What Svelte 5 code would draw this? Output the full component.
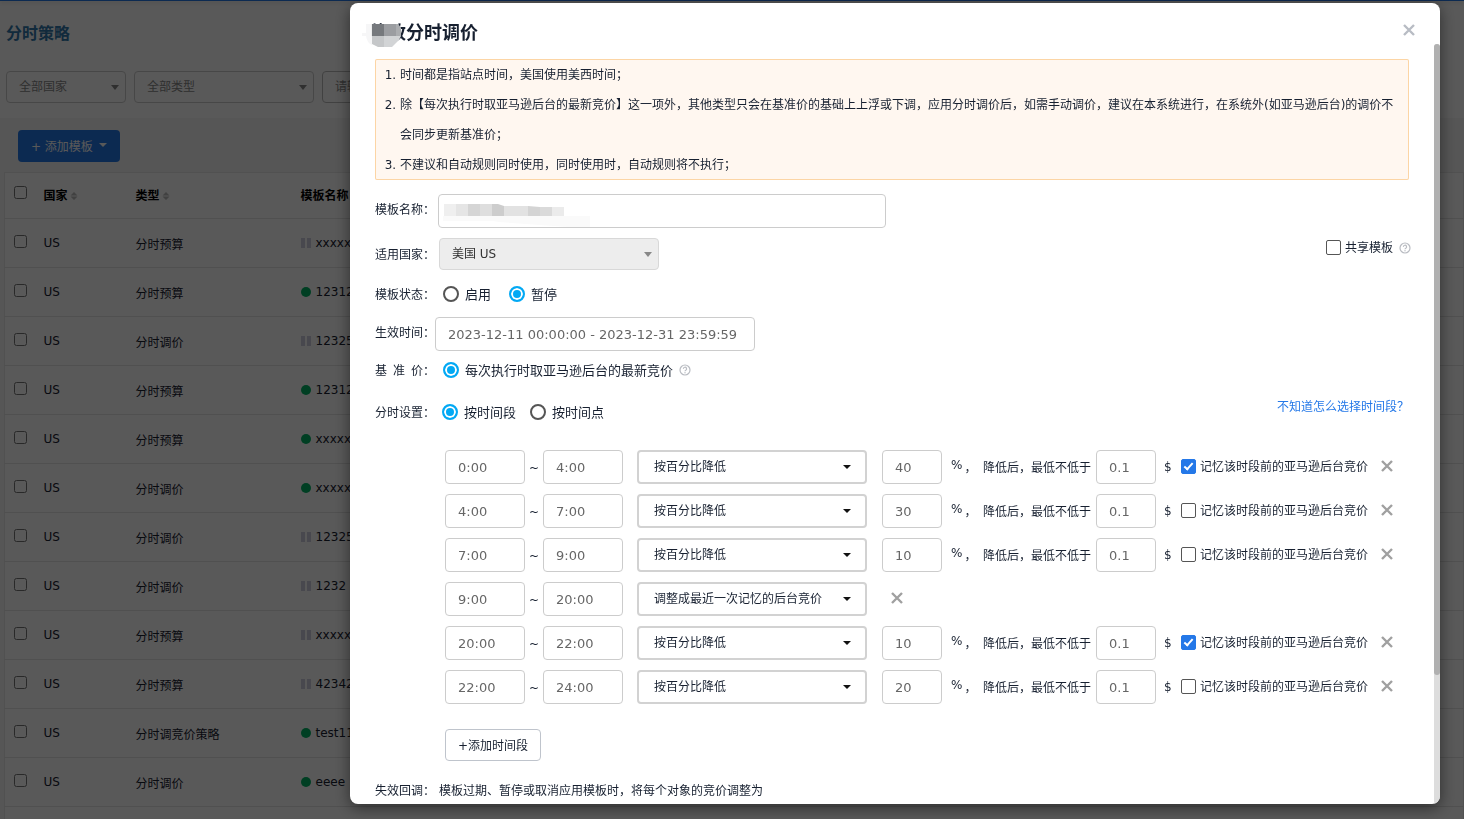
<script>
  const templates = [
    { type: '分时预算', on: false, name: 'xxxxxxx' },
    { type: '分时预算', on: true, name: '1231231' },
    { type: '分时调价', on: false, name: '1232512' },
    { type: '分时预算', on: true, name: '1231231' },
    { type: '分时预算', on: true, name: 'xxxxxxx' },
    { type: '分时调价', on: true, name: 'xxxxxxx' },
    { type: '分时调价', on: false, name: '1232512' },
    { type: '分时调价', on: false, name: '1232' },
    { type: '分时预算', on: false, name: 'xxxxxxx' },
    { type: '分时预算', on: false, name: '4234234' },
    { type: '分时调竞价策略', on: true, name: 'test1111' },
    { type: '分时调价', on: true, name: 'eeee' }
  ];

  const LOWER = '按百分比降低';
  const RESTORE = '调整成最近一次记忆的后台竞价';

  let slots = $state([
    { from: '0:00', to: '4:00', mode: LOWER, pct: '40', min: '0.1', keep: true },
    { from: '4:00', to: '7:00', mode: LOWER, pct: '30', min: '0.1', keep: false },
    { from: '7:00', to: '9:00', mode: LOWER, pct: '10', min: '0.1', keep: false },
    { from: '9:00', to: '20:00', mode: RESTORE, pct: '', min: '', keep: false },
    { from: '20:00', to: '22:00', mode: LOWER, pct: '10', min: '0.1', keep: true },
    { from: '22:00', to: '24:00', mode: LOWER, pct: '20', min: '0.1', keep: false }
  ]);

  let status = $state('pause');
  let split = $state('range');
  let period = $state('2023-12-11 00:00:00 - 2023-12-31 23:59:59');

  function removeSlot(i) {
    slots.splice(i, 1);
  }
  function addSlot() {
    slots.push({ from: '', to: '', mode: LOWER, pct: '', min: '0.1', keep: false });
  }
</script>

{#snippet help()}
  <svg class="help" viewBox="0 0 12 12" aria-hidden="true">
    <circle cx="6" cy="6" r="5" fill="none" stroke="#b9bcc2" stroke-width="1.2" />
    <path d="M4.4 4.9a1.6 1.6 0 1 1 2.4 1.3c-.6.3-.8.5-.8 1.1" fill="none" stroke="#b9bcc2" stroke-width="1.2" />
    <circle cx="6" cy="8.8" r=".7" fill="#b9bcc2" />
  </svg>
{/snippet}

{#snippet cross()}
  <svg class="cross" viewBox="0 0 12 12" aria-hidden="true">
    <path d="M1 1 11 11M11 1 1 11" fill="none" stroke="currentColor" stroke-width="2.4" />
  </svg>
{/snippet}

{#snippet sorter()}
  <svg class="sorter" viewBox="0 0 8 10" aria-hidden="true">
    <path d="M4 1 7.5 4.4H.5zM4 9 .5 5.6h7z" fill="#bbb" />
  </svg>
{/snippet}

<main class="page">
  <div class="topbar"></div>
  <header class="head">
    <h1>分时策略</h1>
    <div class="filters">
      <span class="pick country">
        <select aria-label="国家"><option>全部国家</option></select>
      </span>
      <span class="pick type">
        <select aria-label="类型"><option>全部类型</option></select>
      </span>
      <input class="search" placeholder="请输入模板名称" aria-label="模板名称" />
    </div>
  </header>
  <section class="listing">
    <button class="create" type="button">+ 添加模板 <i class="caret"></i></button>
    <table>
      <thead>
        <tr>
          <th class="c-check"><input type="checkbox" aria-label="全选" /></th>
          <th class="c-country">国家{@render sorter()}</th>
          <th class="c-type">类型{@render sorter()}</th>
          <th>模板名称</th>
        </tr>
      </thead>
      <tbody>
        {#each templates as t}
          <tr>
            <td><input type="checkbox" aria-label={t.name} /></td>
            <td>US</td>
            <td>{t.type}</td>
            <td><span class={t.on ? 'dot' : 'bars'}></span>{t.name}</td>
          </tr>
        {/each}
        <tr><td colspan="4"></td></tr>
      </tbody>
    </table>
  </section>
</main>

<div class="overlay">
  <div class="dialog" role="dialog" aria-modal="true" aria-labelledby="dialog-title">
    <header class="dialog-head">
      <h2 id="dialog-title">
        修改分时调价
        <svg class="mosaic" viewBox="0 0 40 24" aria-hidden="true">
          <path d="M4 0H10V12H10V21Q5 19 4 12H0V9H4z" fill="#f6f6f7" />
          <path d="M9 0H10V12H9z" fill="#eceded" />
          <path d="M10 0H22V12H10z" fill="#76797d" />
          <path d="M22 0H36L39 4V12H22z" fill="#9b9da1" />
          <path d="M34 0H36L39 4V12H34z" fill="#abadb0" />
          <path d="M10 12H22V23H16L10 20z" fill="#c5c7c9" />
          <path d="M22 12H39L37 16 30 23H22z" fill="#d2d4d6" />
        </svg>
      </h2>
      <button class="close" type="button" aria-label="关闭">{@render cross()}</button>
    </header>

    <div class="dialog-scroll">
      <form class="dialog-body">
        <ol class="note">
          <li>时间都是指站点时间，美国使用美西时间；</li>
          <li>除【每次执行时取亚马逊后台的最新竞价】这一项外，其他类型只会在基准价的基础上上浮或下调，应用分时调价后，如需手动调价，建议在本系统进行，在系统外(如亚马逊后台)的调价不会同步更新基准价；</li>
          <li>不建议和自动规则同时使用，同时使用时，自动规则将不执行；</li>
        </ol>

        <div class="row boxed first">
          <label class="name" for="f-name">模板名称：</label>
          <span class="masked">
            <input id="f-name" class="box wide" />
            <svg class="mosaic" viewBox="0 0 148 24" aria-hidden="true">
              <path d="M0 12H147V23H125L56 18 50 17H0z" fill="#fafafa" />
              <path d="M1 0H13V12H1z" fill="#efefef" />
              <path d="M13 0H25V12H13z" fill="#e5e5e5" />
              <path d="M25 0H37V12H25z" fill="#d5d5d5" />
              <path d="M37 0H49V12H37z" fill="#dedede" />
              <path d="M49 0H55L61 2V12H49z" fill="#cdcdcd" />
              <path d="M61 2H85V12H61z" fill="#e2e2e2" />
              <path d="M85 2 97 3V12H85z" fill="#d4d4d4" />
              <path d="M97 3H109V12H97z" fill="#dadada" />
              <path d="M109 3H121V12H109z" fill="#ebebeb" />
            </svg>
          </span>
        </div>

        <div class="row boxed second">
          <label class="name" for="f-country">适用国家：</label>
          <span class="pick nation">
            <select id="f-country" disabled><option>美国 US</option></select>
          </span>
          <span class="share">
            <label class="tick"><input type="checkbox" /><span>共享模板</span></label>
            {@render help()}
          </span>
        </div>

        <div class="row third" role="radiogroup" aria-labelledby="l-status">
          <span class="name" id="l-status">模板状态：</span>
          <label class="choice"><input type="radio" name="status" value="on" bind:group={status} /><span>启用</span></label>
          <label class="choice"><input type="radio" name="status" value="pause" bind:group={status} /><span>暂停</span></label>
        </div>

        <div class="row boxed period">
          <label class="name" for="f-period">生效时间：</label>
          <input id="f-period" class="box date" bind:value={period} />
        </div>

        <div class="row base" role="radiogroup" aria-label="基准价">
          <span class="name spread"><span>基</span><span>准</span><span>价：</span></span>
          <label class="choice"><input type="radio" name="base" checked /><span>每次执行时取亚马逊后台的最新竞价</span></label>
          {@render help()}
        </div>

        <div class="row split" role="radiogroup" aria-labelledby="l-split">
          <span class="name" id="l-split">分时设置：</span>
          <label class="choice"><input type="radio" name="split" value="range" bind:group={split} /><span>按时间段</span></label>
          <label class="choice"><input type="radio" name="split" value="point" bind:group={split} /><span>按时间点</span></label>
          <a class="guide" href="#guide">不知道怎么选择时间段？</a>
        </div>

        <div class="slots">
          {#each slots as s, i}
            <div class="slot">
              <input class="box time" aria-label="开始时间" bind:value={s.from} />
              <span class="tilde">~</span>
              <input class="box time" aria-label="结束时间" bind:value={s.to} />
              <span class="pick mode">
                <select aria-label="调价方式" bind:value={s.mode}>
                  <option>{LOWER}</option>
                  <option>{RESTORE}</option>
                </select>
              </span>
              {#if s.mode === LOWER}
                <input class="box num" aria-label="百分比" bind:value={s.pct} />
                <span class="pct"><span>%</span><span>，</span></span>
                <span class="floor">降低后，最低不低于</span>
                <input class="box num" aria-label="最低竞价" bind:value={s.min} />
                <span class="dollar">$</span>
                <label class="tick"><input type="checkbox" bind:checked={s.keep} /><span>记忆该时段前的亚马逊后台竞价</span></label>
              {/if}
              <button class="remove" class:alone={s.mode !== LOWER} type="button" aria-label="删除" onclick={() => removeSlot(i)}>
                {@render cross()}
              </button>
            </div>
          {/each}
          <button class="add" type="button" onclick={addSlot}>+添加时间段</button>
        </div>

        <div class="row last">
          <span class="name">失效回调：</span>
          <span>模板过期、暂停或取消应用模板时，将每个对象的竞价调整为</span>
        </div>
      </form>
      <div class="track"><div class="thumb"></div></div>
    </div>
  </div>
</div>

<style>
  :global(body) {
    margin: 0;
    overflow: hidden;
    font-family: 'DejaVu Sans', 'Noto Sans CJK SC', sans-serif;
    font-size: 12px;
    color: #172030;
  }
  *, *::before, *::after { box-sizing: border-box; }
  input, select, button { font: inherit; color: inherit; margin: 0; }
  h1, h2 { margin: 0; }

  .page { height: 100vh; overflow: hidden; background: #fff; }
  .topbar { height: 1px; background: #2478e8; box-shadow: 0 1px 4px rgba(0, 0, 0, 0.3); }
  .head { height: 117px; padding: 21px 6px 0; }
  h1 { font-size: 16px; line-height: 24px; font-weight: 700; color: #3279ac; }
  .filters { display: flex; gap: 8px; margin-top: 25px; }

  .pick { position: relative; display: block; flex: none; }
  .pick select {
    appearance: none;
    display: block;
    width: 100%;
    height: 32px;
    padding: 0 12px;
    border: 1px solid #ccc;
    border-radius: 4px;
    background: #fff;
    opacity: 1;
  }
  .pick::after {
    content: '';
    position: absolute;
    right: 7px;
    top: 14px;
    border: 4px solid transparent;
    border-top: 5px solid #888;
    border-bottom: 0;
    pointer-events: none;
  }
  .country { width: 120px; }
  .type { width: 180px; }
  .filters select { color: #888; }
  .search { width: 180px; height: 32px; padding: 0 12px; border: 1px solid #bbb; border-radius: 4px; }
  .search::placeholder { color: #888; }

  .listing { padding: 12px 0 0 4px; background: #f6f6f6; }
  .create {
    display: flex;
    align-items: center;
    gap: 6px;
    height: 32px;
    margin: 0 0 10px 14px;
    padding: 0 13px 2px;
    border: 0;
    border-radius: 4px;
    background: #2478e8;
    color: #fff;
  }
  .caret { border: 4px solid transparent; border-top-color: #fff; border-bottom: 0; }
  table { width: 100%; table-layout: fixed; border-collapse: collapse; background: #fff; border: 1px solid #e8e8e8; }
  th, td { height: 49px; padding: 0; text-align: left; border-bottom: 1px solid #e4e4e4; white-space: nowrap; }
  th { height: 46px; padding-bottom: 2px; color: #000; }
  .c-check { width: 39px; }
  .c-country { width: 92px; }
  .c-type { width: 165px; }
  th input, td input { display: block; width: 13px; height: 13px; margin: 0 0 4px 9px; }
  .sorter { width: 8px; height: 10px; margin-left: 2px; vertical-align: -1px; }
  .dot, .bars { display: inline-block; width: 10px; height: 10px; margin-right: 5px; vertical-align: -1px; }
  .dot { border-radius: 50%; background: #00b464; }
  .bars { border: solid #cfcfe0; border-width: 0 4px; }

  .overlay {
    position: fixed;
    inset: 0;
    display: flex;
    padding: 3px 24px 15px 350px;
    background: rgba(0, 0, 0, 0.65);
  }
  .dialog {
    flex: 1;
    min-width: 0;
    display: flex;
    flex-direction: column;
    overflow: hidden;
    border-radius: 8px;
    background: #fff;
    box-shadow: 0 4px 16px rgba(0, 0, 0, 0.5);
  }
  .dialog-head {
    flex: none;
    display: flex;
    justify-content: space-between;
    align-items: flex-end;
    height: 41px;
    padding: 0 24px 0 20px;
  }
  h2 { position: relative; font-size: 18px; line-height: 22px; font-weight: 700; }
  .mosaic { position: absolute; display: block; }
  h2 .mosaic { left: -8px; top: 2px; width: 40px; height: 24px; }
  button { cursor: pointer; }
  .close, .remove { display: grid; place-items: center; padding: 0; border: 0; background: none; color: #a0a0a0; }
  .close { width: 14px; height: 28px; color: #b8bcc4; }
  .cross { width: 12px; height: 12px; }

  .dialog-scroll { flex: 1; min-height: 0; display: flex; }
  .dialog-body { flex: 1; min-width: 0; overflow: hidden; padding: 15px 25px 0; }
  .track { flex: none; width: 6px; background: #ddd; border-radius: 3px; }
  .thumb { height: 83%; border-radius: 3px; background: #b0b0b0; }

  .note {
    margin: 0;
    padding: 1px 10px 0 25px;
    line-height: 30px;
    background: #fff7f0;
    border-radius: 2px;
    box-shadow: inset 0 0 0 1px #fcd5a5;
  }

  .row { display: flex; align-items: center; height: 24px; }
  .boxed { height: 34px; }
  .name { flex: none; width: 64px; padding-bottom: 2px; white-space: nowrap; }
  .boxed .name { padding-bottom: 6px; }
  .spread { display: flex; gap: 6px; }
  .first { margin-top: 14px; }
  .first .name { width: 63px; }
  .second { height: 32px; margin-top: 10px; }
  .second .name { padding-bottom: 2px; }
  .third { margin-top: 12px; }
  .period { margin-top: 11px; }
  .period .name { width: 60px; }
  .base { margin-top: 7px; }
  .split { margin-top: 18px; }
  .split .name { width: 63px; }
  .last { margin-top: 16px; }
  .last .name { padding-bottom: 0; }

  .box {
    height: 34px;
    padding: 0 12px;
    border: 1px solid #ccc;
    border-radius: 4px;
    background: #fff;
    font-size: 13px;
    color: #666;
  }
  .masked { position: relative; display: block; }
  .masked .mosaic { left: 5px; top: 10px; width: 148px; height: 24px; pointer-events: none; }
  .wide { display: block; width: 448px; }
  .date { width: 320px; }
  .time { width: 80px; }
  .num { width: 60px; }

  .nation { width: 220px; }
  .nation select { background: #ededed; border-color: #d8d8d8; color: #333; }
  .share { display: flex; align-items: center; gap: 6px; margin: 0 -2px 0 auto; padding-bottom: 13px; }
  .help { width: 12px; height: 12px; flex: none; }

  .tick { display: flex; align-items: center; gap: 4px; white-space: nowrap; }
  .tick span { padding-bottom: 2px; }
  .slot .tick { padding-bottom: 1px; }
  .tick input {
    appearance: none;
    display: grid;
    place-items: center;
    width: 15px;
    height: 15px;
    border: 1px solid #555;
    border-radius: 2px;
    background: #fff;
  }
  .tick input:checked { border-color: #2478e8; background: #2478e8; }
  .tick input:checked::after {
    content: '';
    width: 5px;
    height: 9px;
    margin-bottom: 2px;
    border: solid #fff;
    border-width: 0 2px 2px 0;
    transform: rotate(42deg);
  }

  .choice { display: flex; align-items: center; gap: 6px; margin: 0 14px 0 4px; font-size: 13px; white-space: nowrap; }
  .choice span { padding-bottom: 2px; }
  .base .choice { margin-right: 6px; }
  .split .choice { margin-right: 10px; }
  .choice input { appearance: none; width: 16px; height: 16px; border: 2px solid #555; border-radius: 50%; background: #fff; }
  .choice input:checked {
    border-color: #03a9f4;
    background: #03a9f4;
    box-shadow: inset 0 0 0 2px #fff;
  }
  .guide { margin: 0 0 14px auto; color: #2478e8; text-decoration: none; }

  .slots { display: flex; flex-direction: column; align-items: flex-start; gap: 10px; margin-top: 26px; padding-left: 70px; }
  .slot { display: flex; align-items: center; height: 34px; white-space: nowrap; }
  .slot > * { flex: none; }
  .tilde { width: 18px; padding-top: 2px; text-align: center; }
  .mode { width: 230px; margin: 0 15px 0 14px; }
  .mode select { height: 34px; padding: 0 15px; border: 2px solid #d2d2d2; }
  .mode::after { right: 16px; top: 15px; border-top: 4px solid #111; border-bottom: 0; }
  .pct { display: flex; gap: 2px; width: 41px; padding: 0 0 2px 9px; }
  .floor { width: 113px; padding-bottom: 2px; }
  .dollar { width: 25px; padding-left: 8px; }
  .remove { width: 14px; height: 24px; margin-left: 12px; padding-bottom: 2px; }
  .alone { margin-left: 8px; }
  .add { height: 32px; margin-top: 15px; padding: 0 12px 2px; border: 1px solid #bfc4cc; border-radius: 4px; background: #fff; }
</style>
